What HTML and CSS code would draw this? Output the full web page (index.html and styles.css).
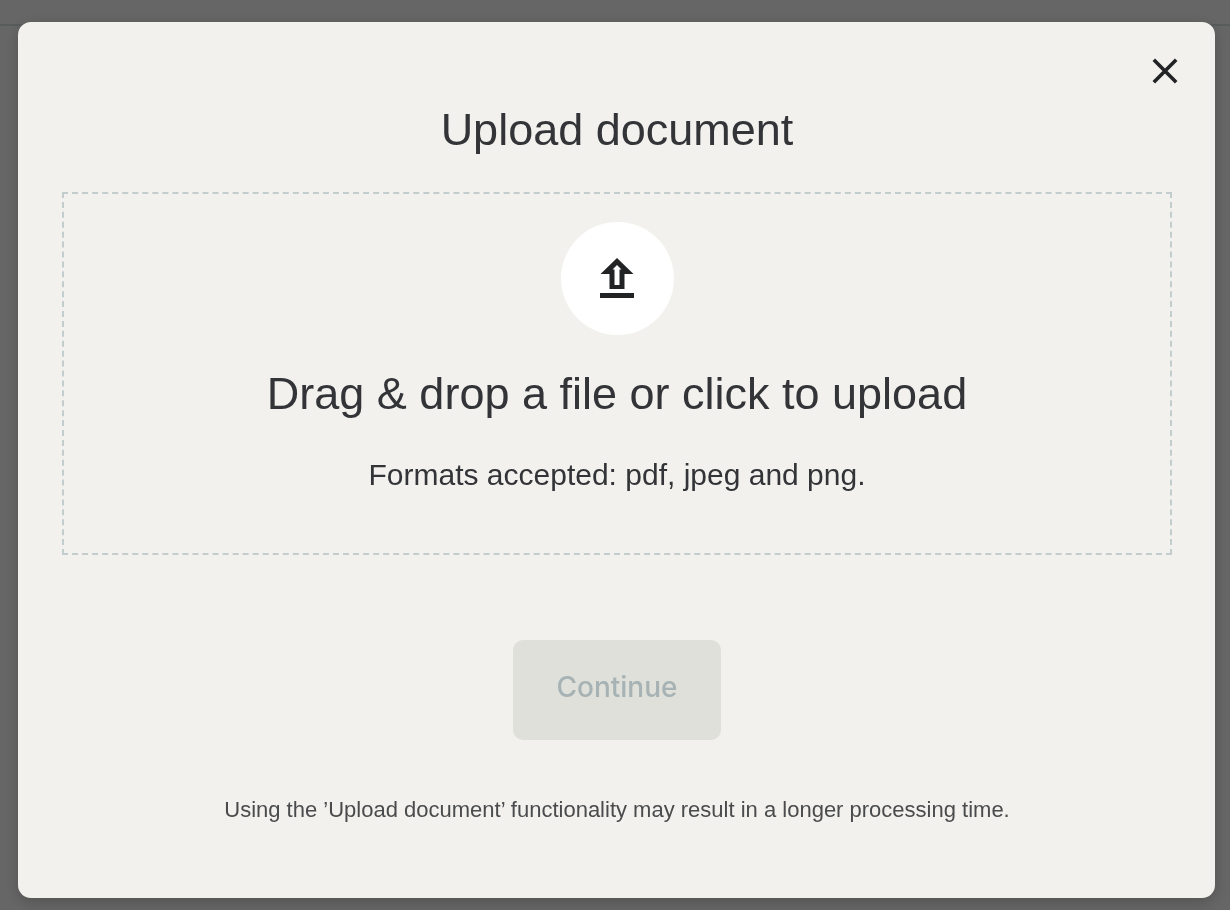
FILE: index.html
```
<!DOCTYPE html>
<html lang="en">
<head>
    <meta charset="UTF-8">
    <meta name="viewport" content="width=device-width, initial-scale=1.0">
    <title>Upload document</title>
    <link rel="stylesheet" href="styles.css">
</head>
<body>

<div class="page-header"></div>

<div class="overlay">
    <div class="modal" role="dialog" aria-modal="true" aria-labelledby="modal-title">
        <div class="modal-top">
            <button type="button" class="close-button" aria-label="Close">
                <svg width="26" height="26" viewBox="0 0 26 26">
                    <path d="M1.8 1.8 L24.2 24.2 M24.2 1.8 L1.8 24.2" fill="none" stroke="#222325" stroke-width="3.6"/>
                </svg>
            </button>
        </div>

        <form class="modal-body">
            <h1 class="modal-title" id="modal-title">Upload document</h1>

            <label class="dropzone" for="document-file">
                <span class="upload-icon">
                    <svg width="34" height="42" viewBox="0 0 34 42">
                        <path fill="#222325" fill-rule="evenodd" d="M17 0 L33.5 16 H24.5 V31 H9.5 V16 H0.5 Z M17 7 L12.5 11.5 H14.5 V27 H19.5 V11.5 H21.5 Z"/>
                        <rect x="0" y="35" width="34" height="5" fill="#222325"/>
                    </svg>
                </span>
                <span class="dropzone-title">Drag &amp; drop a file or click to upload</span>
                <span class="dropzone-hint">Formats accepted: pdf, jpeg and png.</span>
                <input class="file-input" type="file" id="document-file" name="document" accept=".pdf,.jpeg,.jpg,.png">
            </label>

            <button type="submit" class="continue-button" disabled>Continue</button>

            <p class="note">Using the ’Upload document’ functionality may result in a longer processing time.</p>
        </form>
    </div>
</div>

</body>
</html>
```

FILE: styles.css
```
* {
    box-sizing: border-box;
}

body {
    margin: 0;
    background-color: #fff;
    color: #333437;
    font-family: "Liberation Sans", Arial, sans-serif;
}

.page-header {
    height: 26px;
    border-bottom: 2px solid #dde5e5;
}

.overlay {
    position: fixed;
    inset: 0;
    padding: 22px 15px 12px 18px;
    overflow: auto;
    background-color: rgba(0, 0, 0, 0.6);
}

.modal {
    border-radius: 13px;
    background-color: #f2f1ed;
    box-shadow: 0 4px 16px rgba(0, 0, 0, 0.2);
}

.modal-top {
    display: flex;
    justify-content: flex-end;
    padding: 28px 29px 0;
}

.close-button {
    display: flex;
    align-items: center;
    justify-content: center;
    width: 42px;
    height: 42px;
    padding: 0;
    border: none;
    background: none;
    cursor: pointer;
}

.modal-body {
    display: flex;
    flex-direction: column;
    align-items: center;
    padding: 12px 43px 72px 44px;
    text-align: center;
}

.modal-title,
.dropzone-title {
    margin: 0;
    font-size: 45px;
    font-weight: 400;
    line-height: 52px;
}

.dropzone {
    display: flex;
    flex-direction: column;
    align-items: center;
    align-self: stretch;
    margin-top: 36px;
    padding: 28px 28px 60px;
    border: 2px dashed #c3cdcd;
    cursor: pointer;
}

.upload-icon {
    display: flex;
    align-items: center;
    justify-content: center;
    width: 113px;
    height: 113px;
    margin-bottom: 33px;
    border-radius: 50%;
    background-color: #fff;
}

.dropzone-hint {
    margin-top: 37px;
    font-size: 30px;
    line-height: 36px;
}

/* visually hidden, the dropzone label opens it */
.file-input {
    position: absolute;
    width: 1px;
    height: 1px;
    overflow: hidden;
    clip-path: inset(50%);
}

.continue-button {
    height: 100px;
    margin-top: 85px;
    padding: 0 43px 6px;
    border: none;
    border-radius: 10px;
    background-color: #dfe0da;
    color: #a6b2b4;
    font-family: Inter, "Liberation Sans", Arial, sans-serif;
    font-size: 28px;
    font-weight: 500;
}

.note {
    margin: 54px 0 0;
    color: #4a4b4c;
    font-size: 22px;
    line-height: 32px;
}
```
